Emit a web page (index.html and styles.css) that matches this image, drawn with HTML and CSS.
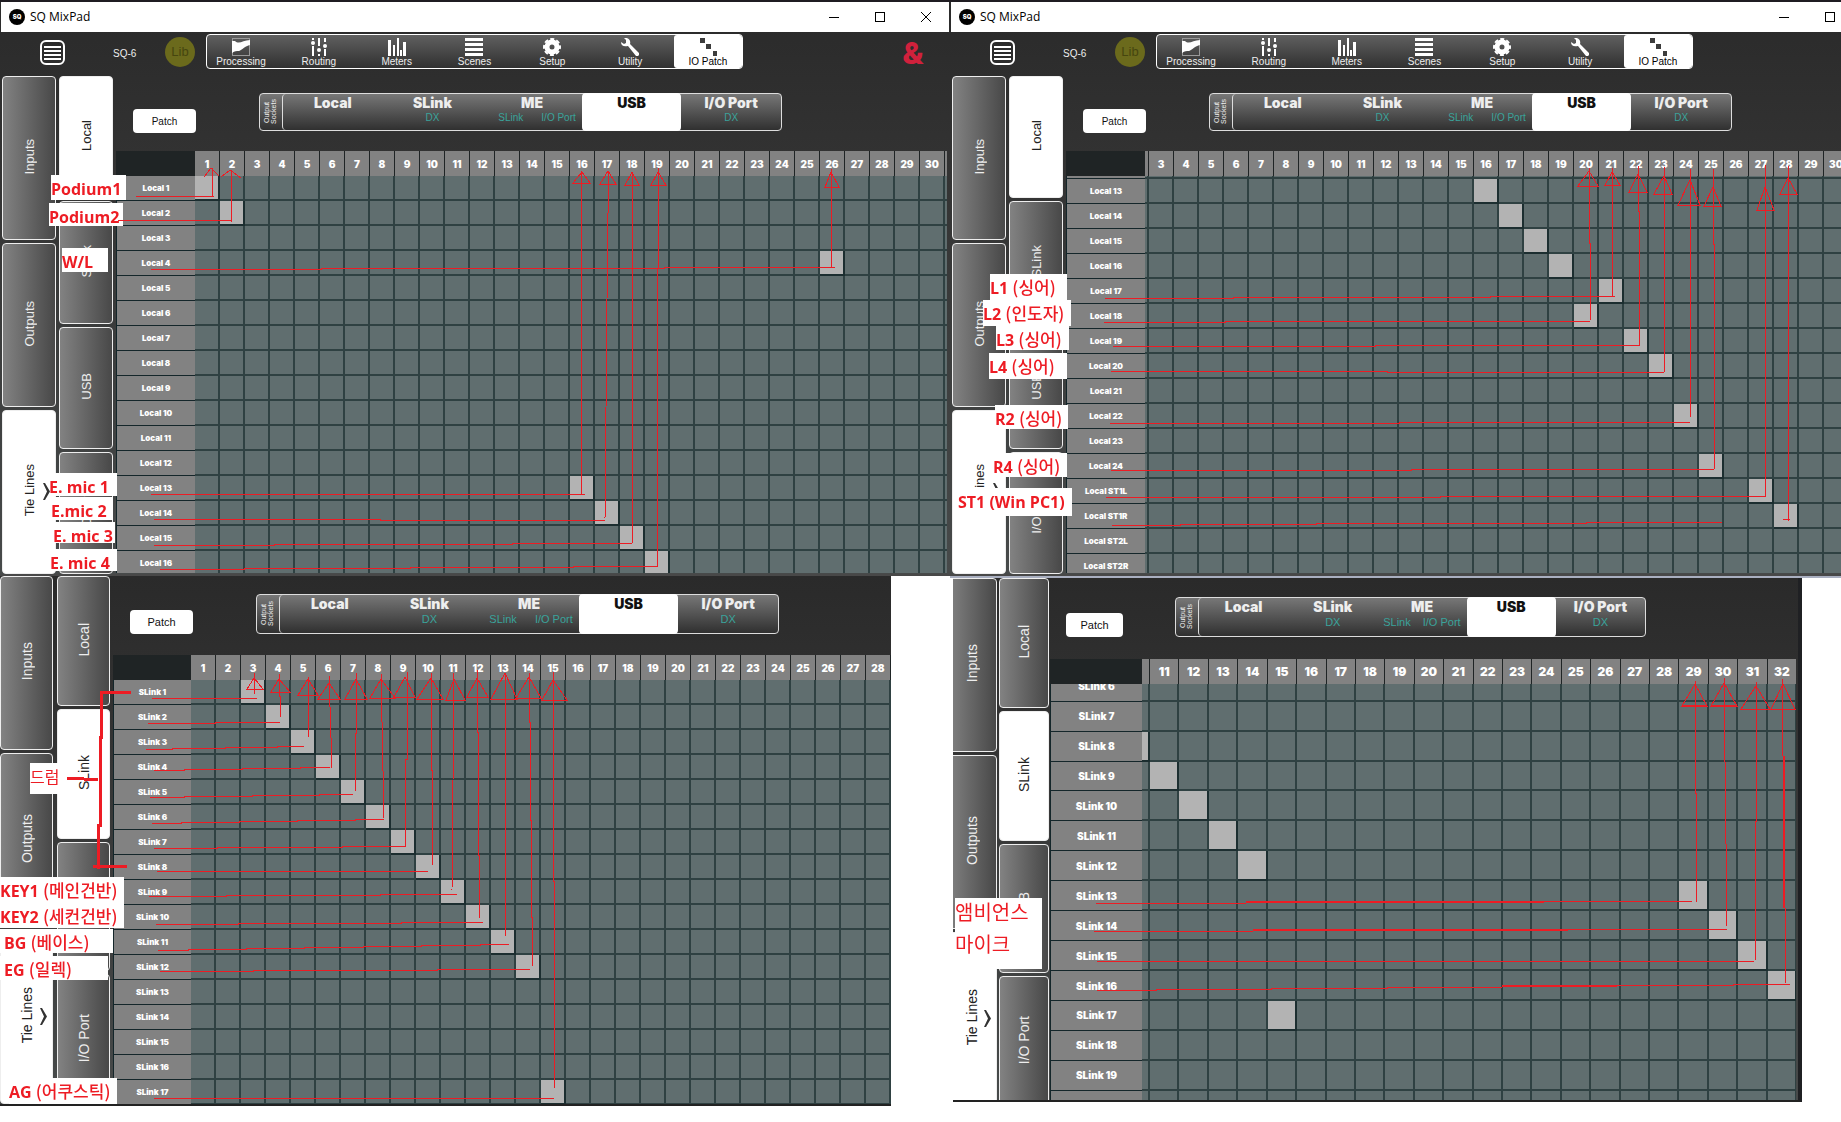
FILE: index.html
```html
<!DOCTYPE html>
<html lang="en">
<head>
<meta charset="utf-8">
<title>SQ MixPad – USB tie lines</title>
<link rel="stylesheet" href="styles.css">
<script src="patch.js" defer></script>
</head>
<body>
<svg class="defs" aria-hidden="true">
  <symbol id="i-menu" viewBox="0 0 25 25"><rect x="1" y="1" width="23" height="23" rx="5" fill="none" stroke="#fff" stroke-width="2"/><path d="M4 7h17M4 11h17M4 15h17M4 19h17" stroke="#fff" stroke-width="2"/></symbol>
  <symbol id="i-processing" viewBox="0 0 18 18"><rect x=".5" y=".5" width="17" height="17" fill="none" stroke="#999"/><path d="M0 3h3c4 4 8-1 15-1v5c-5 1-8 5-11 6-3 0-4 0-7 2z" fill="#fff"/></symbol>
  <symbol id="i-routing" viewBox="0 0 18 18"><g fill="#fff"><path d="M2 0h2v2H2zM2 8h2v10H2zM8 0h2v8H8zM8 16h2v2H8zM14 0h2v4h-2zM14 11h2v7h-2z"/><circle cx="3" cy="5" r="2"/><circle cx="9" cy="12" r="2"/><circle cx="15" cy="8" r="2"/></g></symbol>
  <symbol id="i-meters" viewBox="0 0 18 18"><path d="M0 2h3v16H0zM5 7h2v11H5zM9 0h2v18H9zM12 12h2v6h-2zM15 4h3v14h-3z" fill="#fff"/></symbol>
  <symbol id="i-scenes" viewBox="0 0 18 18"><path d="M0 0h18v3H0zM0 5h18v3H0zM0 10h18v3H0zM0 15h18v3H0z" fill="#fff"/></symbol>
  <symbol id="i-setup" viewBox="0 0 18 18"><circle cx="9" cy="9" r="5" fill="none" stroke="#fff" stroke-width="5"/><circle cx="9" cy="9" r="8" fill="none" stroke="#fff" stroke-width="2" stroke-dasharray="4 2.28" stroke-dashoffset="2"/></symbol>
  <symbol id="i-utility" viewBox="0 0 18 18"><path d="M0 4l3 2 2-1V2L3 0c5-1 7 3 6 6l9 9v2l-1 1h-2L7 8C3 9 0 8 0 4z" fill="#fff"/></symbol>
  <symbol id="i-patch" viewBox="0 0 18 18"><path d="M1 0h5v5H1zM7 6h5v5H7zM14 13h5v5h-5z" fill="#3c3c3c"/></symbol>
</svg>

<main class="board">
  <section class="panel window">
    <header class="titlebar">
      <span class="logo">SQ</span><span class="title">SQ MixPad</span>
      <div class="controls">
        <button aria-label="Minimise"><svg width="10" height="10"><path d="M0 5.5h10" stroke="#000"/></svg></button>
        <button aria-label="Maximise"><svg width="10" height="10"><rect x=".5" y=".5" width="9" height="9" fill="none" stroke="#000"/></svg></button>
        <button aria-label="Close"><svg width="10" height="10"><path d="M0 0l10 10M10 0L0 10" stroke="#000"/></svg></button>
      </div>
    </header>
    <div class="topbar">
      <button class="menu" aria-label="Menu"><svg><use href="#i-menu"/></svg></button>
      <span class="model">SQ-6</span><button class="lib">Lib</button>
      <nav class="tools">
        <button><svg><use href="#i-processing"/></svg>Processing</button>
        <button><svg><use href="#i-routing"/></svg>Routing</button>
        <button><svg><use href="#i-meters"/></svg>Meters</button>
        <button><svg><use href="#i-scenes"/></svg>Scenes</button>
        <button><svg><use href="#i-setup"/></svg>Setup</button>
        <button><svg><use href="#i-utility"/></svg>Utility</button>
        <button class="on"><svg><use href="#i-patch"/></svg>IO Patch</button>
      </nav>
      <span class="amp">&amp;</span>
    </div>
    <div class="work">
      <nav class="side"><button><span>Inputs</span></button><button><span>Outputs</span></button><button class="on more"><span>Tie Lines</span></button></nav>
      <nav class="side"><button class="on"><span>Local</span></button><button><span>SLink</span></button><button><span>USB</span></button><button><span>I/O Port</span></button></nav>
      <div class="content">
        <div class="sockets"><button class="patch">Patch</button>
          <div class="outputs"><span class="caption">Output<br>Sockets</span>
            <button>Local</button><button>SLink<small>DX</small></button><button>ME<small><i>SLink</i><i>I/O Port</i></small></button><button class="on">USB</button><button>I/O Port<small>DX</small></button></div>
        </div>
        <div class="matrix" data-source="local" data-left="0" data-top="0" data-on="1:1 2:2 4:26 13:16 14:17 15:18 16:19"></div>
      </div>
    </div>
  </section>

  <section class="panel window cropped">
    <header class="titlebar">
      <span class="logo">SQ</span><span class="title">SQ MixPad</span>
      <div class="controls">
        <button aria-label="Minimise"><svg width="10" height="10"><path d="M0 5.5h10" stroke="#000"/></svg></button>
        <button aria-label="Maximise"><svg width="10" height="10"><rect x=".5" y=".5" width="9" height="9" fill="none" stroke="#000"/></svg></button>
        <button aria-label="Close"><svg width="10" height="10"><path d="M0 0l10 10M10 0L0 10" stroke="#000"/></svg></button>
      </div>
    </header>
    <div class="topbar">
      <button class="menu" aria-label="Menu"><svg><use href="#i-menu"/></svg></button>
      <span class="model">SQ-6</span><button class="lib">Lib</button>
      <nav class="tools">
        <button><svg><use href="#i-processing"/></svg>Processing</button>
        <button><svg><use href="#i-routing"/></svg>Routing</button>
        <button><svg><use href="#i-meters"/></svg>Meters</button>
        <button><svg><use href="#i-scenes"/></svg>Scenes</button>
        <button><svg><use href="#i-setup"/></svg>Setup</button>
        <button><svg><use href="#i-utility"/></svg>Utility</button>
        <button class="on"><svg><use href="#i-patch"/></svg>IO Patch</button>
      </nav>
    </div>
    <div class="work">
      <nav class="side"><button><span>Inputs</span></button><button><span>Outputs</span></button><button class="on more"><span>Tie Lines</span></button></nav>
      <nav class="side"><button class="on"><span>Local</span></button><button><span>SLink</span></button><button><span>USB</span></button><button><span>I/O Port</span></button></nav>
      <div class="content">
        <div class="sockets"><button class="patch">Patch</button>
          <div class="outputs"><span class="caption">Output<br>Sockets</span>
            <button>Local</button><button>SLink<small>DX</small></button><button>ME<small><i>SLink</i><i>I/O Port</i></small></button><button class="on">USB</button><button>I/O Port<small>DX</small></button></div>
        </div>
        <div class="matrix" data-source="local" data-left="46" data-top="297" data-on="13:16 14:17 15:18 16:19 17:21 18:20 19:22 20:23 22:24 24:25 25:27 26:28"></div>
      </div>
    </div>
  </section>

  <section class="panel lower">
    <div class="work">
      <nav class="side"><button><span>Inputs</span></button><button><span>Outputs</span></button><button class="on more"><span>Tie Lines</span></button></nav>
      <nav class="side"><button><span>Local</span></button><button class="on"><span>SLink</span></button><button><span>USB</span></button><button><span>I/O Port</span></button></nav>
      <div class="content">
        <div class="sockets"><button class="patch">Patch</button>
          <div class="outputs"><span class="caption">Output<br>Sockets</span>
            <button>Local</button><button>SLink<small>DX</small></button><button>ME<small><i>SLink</i><i>I/O Port</i></small></button><button class="on">USB</button><button>I/O Port<small>DX</small></button></div>
        </div>
        <div class="matrix" data-source="slink" data-left="0" data-top="0" data-on="1:3 2:4 3:5 4:6 5:7 6:8 7:9 8:10 9:11 10:12 11:13 12:14 17:15"></div>
      </div>
    </div>
  </section>

  <div class="edge">
  <section class="panel lower zoomed">
    <div class="work">
      <nav class="side"><button><span>Inputs</span></button><button><span>Outputs</span></button><button class="on more"><span>Tie Lines</span></button></nav>
      <nav class="side"><button><span>Local</span></button><button class="on"><span>SLink</span></button><button><span>USB</span></button><button><span>I/O Port</span></button></nav>
      <div class="content">
        <div class="sockets"><button class="patch">Patch</button>
          <div class="outputs"><span class="caption">Output<br>Sockets</span>
            <button>Local</button><button>SLink<small>DX</small></button><button>ME<small><i>SLink</i><i>I/O Port</i></small></button><button class="on">USB</button><button>I/O Port<small>DX</small></button></div>
        </div>
        <div class="matrix" data-source="slink" data-left="286" data-top="162" data-on="8:10 9:11 10:12 11:13 12:14 13:29 14:30 15:31 16:32 17:15"></div>
      </div>
    </div>
  </section>
  </div>

  <svg class="notes" width="1841" height="1122" role="group" aria-label="Handwritten patch notes">
    <g class="paper">
      <rect x="51" y="175" width="75" height="25"/><rect x="49" y="203" width="74" height="23"/><rect x="62" y="248" width="46" height="24"/>
      <rect x="50" y="473" width="67" height="23"/><rect x="52" y="497" width="61" height="23"/><rect x="53" y="522" width="62" height="21"/><rect x="50" y="549" width="67" height="22"/>
      <rect x="990" y="274" width="77" height="26"/><rect x="983" y="300" width="88" height="26"/><rect x="996" y="326" width="73" height="24"/><rect x="989" y="353" width="78" height="26"/>
      <rect x="995" y="405" width="73" height="24"/><rect x="993" y="453" width="74" height="24"/><rect x="957" y="488" width="115" height="28"/>
      <rect x="30" y="763" width="36" height="31"/><rect x="0" y="877" width="124" height="51"/><rect x="0" y="929" width="113" height="24"/><rect x="0" y="956" width="108" height="24"/><rect x="9" y="1078" width="108" height="26"/>
      <rect x="955" y="898" width="87" height="71"/>
    </g>
    <g class="ink">
      <path d="M136 196H214M212 196V168M204 177L211 168L219 176M118 220H231M231 222V170M221 177L230 170L241 178"/>
      <path d="M151 269H321V268H664V267H835M831 268V169M831 172L825 187H839Z"/>
      <path d="M151 494H585M581 494V171M582 172L573 183H590ZM154 519H380V520H605M608 171V213L607 300L605 518M608 171L600 184H616Z"/>
      <path d="M154 545H274V544H512V543H632M632 543V172M632 172L625 185H639ZM160 569H244V568H410V567H573V566H658M658 168V268H657V566M658 172L651 185H666Z"/>
      <path d="M1104 322H1225V321H1590M1589 168V243H1590V320M1589 171L1578 186H1598ZM1105 298H1233V297H1490V296H1615M1612 168V297M1612 172L1605 185H1620Z"/>
      <path d="M1113 346H1375V345H1640M1638 166V211H1639V345M1638 174L1629 192H1647ZM1111 371H1387V372H1664M1664 167V372M1664 176L1654 194H1672Z"/>
      <path d="M1110 423H1399V422H1690M1690 169V417M1690 180L1678 205H1700ZM1111 470H1411V469H1714M1713 169V244H1714V469M1713 187L1704 206H1721Z"/>
      <path d="M1106 497H1440V496H1765M1765 165V497M1765 187L1757 210H1774ZM1112 525H1180V524H1316V523H1586V522H1722M1788 166V521M1788 178L1780 194H1797ZM1783 519H1790"/>
      <path d="M152 698H257M254 673V694M254 678L247 689H263ZM148 723H215V722H280M279 674V696H280V717M279 679L271 692H290Z"/>
      <path d="M146 749H172V748H225V747H277V746H304M308 677V737M308 679L298 695H318ZM154 770H184V769H242V768H300V767H330M329 676L332 768M329 683L318 699H340Z"/>
      <path d="M150 797H184V796H252V795H319V794H353M356 673V733H355V791M356 679L345 699H367ZM152 823H181V822H239V821H297V820H355V819H384M381 673L384 818M381 679L370 698H395Z"/>
      <path d="M154 848H217V847H342V846H406M407 672V759H405V846M405 677L394 697H415ZM157 871H428M431 673V770H432V865M431 678L417 699H443Z"/>
      <path d="M149 896H226V895H380V894H457M454 673L452 890M454 679L446 700H465ZM156 924H238V923H401V922H483M477 670V732H478V855H479V918M477 678L467 697H488Z"/>
      <path d="M158 950H188V949H246V948H304V947H363V946H421V945H480V944H509M505 673V936M505 673L491 699H517ZM160 971H253V970H437V969H530M529 673V722H530V820H531V917H532V966M529 677L516 698H541Z"/>
      <path d="M154 1098H554M553 672V881H554V1088M553 680L542 700H567Z"/>
      <path d="M1096 903H1246M1544 901H1692M1695 681V793H1696V902M1695 684L1682 706H1707ZM1094 931H1253M1568 929H1727M1724 678L1727 926M1724 683L1711 706H1737Z"/>
      <path d="M1097 961H1754M1756 682V821H1755V960M1756 686L1741 709H1770ZM1097 990H1156V989H1271V988H1387V987H1502M1617 985H1733V984H1790M1782 679V756M1785 908V983M1783 684L1771 709H1795Z"/>
      <path class="wide" d="M1246 902H1544M1253 930H1568M1502 986H1617M1784 756V908M1682 706H1707M1711 706H1737"/>
      <path class="marker" d="M131 692H101V737H100V825H98V869M93 866H110L127 867M67 778L84 779L98 780"/>
    </g>
    <g class="words">
      <text x="51" y="195">Podium1</text><text x="49" y="223">Podium2</text><text x="62" y="268">W/L</text>
      <text x="49" y="493">E. mic 1</text><text x="51" y="517">E.mic 2</text><text x="53" y="542">E. mic 3</text><text x="50" y="569">E. mic 4</text>
      <text x="990" y="294">L1 <tspan>(싱어)</tspan></text><text x="983" y="320">L2 <tspan>(인도자)</tspan></text><text x="996" y="346">L3 <tspan>(싱어)</tspan></text><text x="989" y="373">L4 <tspan>(싱어)</tspan></text>
      <text x="995" y="425">R2 <tspan>(싱어)</tspan></text><text x="993" y="473">R4 <tspan>(싱어)</tspan></text><text x="958" y="508">ST1 (Win PC1)</text>
      <text x="0" y="897">KEY1 <tspan>(메인건반)</tspan></text><text x="0" y="923">KEY2 <tspan>(세컨건반)</tspan></text><text x="4" y="949">BG <tspan>(베이스)</tspan></text><text x="4" y="976">EG <tspan>(일렉)</tspan></text><text x="9" y="1098">AG <tspan>(어쿠스틱)</tspan></text>
      <text class="thin" x="30" y="783">드럼</text>
      <text class="large" x="955" y="920">앰비언스</text><text class="large" x="955" y="952">마이크</text>
    </g>
  </svg>
</main>
</body>
</html>
```

FILE: styles.css
```css
* { box-sizing: border-box; }

body {
  margin: 0;
  background: #fff;
  font-family: "Liberation Sans", Arial, sans-serif;
  font-size: 10px;
}

button {
  margin: 0;
  padding: 0;
  border: 0;
  background: none;
  color: inherit;
  font: inherit;
}

.defs { position: absolute; width: 0; height: 0; }

.board {
  position: relative;
  display: grid;
  grid-template-columns: minmax(0, 950fr) minmax(0, 891fr);
  align-items: start;
  min-height: 100vh;
  align-content: start;
  overflow: hidden;
}

.panel {
  --side: 54px;
  --label: 79px;
  --table: 879px;
  overflow: hidden;
  background: linear-gradient(#2a2a2a, #333 30%, #474a4a);
  color: #eee;
}

/* Window frame */
.window { border-top: 2px solid #1f1c22; border-bottom: 2px solid #484848; }
.window > * { min-width: 950px; }

.titlebar {
  display: flex;
  align-items: center;
  gap: 5px;
  height: 30px;
  padding-left: 9px;
  border-left: 1px solid #2c2c2c;
  border-right: 1px solid #2c2c2c;
  background: #fff;
  color: #000;
  font-family: "Open Sans", "Noto Sans", sans-serif;
  font-size: 12px;
}
.titlebar .logo {
  width: 16px;
  height: 16px;
  margin-left: -1px;
  border-radius: 50%;
  background: #000;
  color: #fff;
  font: 900 6px/16px Inter, sans-serif;
  text-align: center;
}
.titlebar .title { padding-bottom: 1px; }
.controls { display: flex; margin-left: auto; }
.controls button { width: 46px; height: 28px; }

.topbar { display: flex; align-items: center; height: 44px; padding: 0 26px 0 40px; }
.menu svg { display: block; width: 25px; height: 25px; }
.menu { margin-bottom: 3px; }
.model { width: 52px; margin: 0 0 2px 48px; }
.model + .lib {
  width: 30px;
  height: 30px;
  margin: 0 11px 5px 0;
  border-radius: 50%;
  background: #6b6a1c;
  color: #46460f;
  font-size: 13px;
}
.tools {
  display: flex;
  justify-content: space-between;
  width: 537px;
  height: 35px;
  margin-bottom: 5px;
  border: 1px solid #fff;
  border-radius: 4px;
  background: linear-gradient(#606060, #303030);
}
.tools button {
  display: flex;
  flex-direction: column;
  align-items: center;
  width: 68px;
  padding-top: 3px;
  line-height: 12px;
}
.tools svg { width: 18px; height: 18px; flex: none; overflow: visible; }
.tools .on { border-radius: 3px; background: #fff; color: #000; }
.amp { margin: 0 0 3px auto; color: #d0213c; font: 900 32px/32px Roboto, sans-serif; }

/* Work area */
.work { display: flex; height: 498px; gap: 3px; padding: 0 3px 0 2px; }
.side { flex: none; display: grid; grid-auto-rows: 1fr; gap: 3px; width: var(--side); height: 498px; }
.side button {
  position: relative;
  border: 1px solid #eee;
  border-radius: 4px;
  background: linear-gradient(90deg, #828282, #484848);
  font-size: 13px;
}
.side span { writing-mode: vertical-rl; transform: rotate(180deg); display: inline-block; }
.side .on { background: #fff; color: #222; }
.more::after {
  content: "";
  position: absolute;
  right: 5px;
  top: 50%;
  width: 7px;
  height: 17px;
  margin-top: -9px;
  background: #333;
  clip-path: polygon(0 0, 2px 0, 7px 50%, 2px 100%, 0 100%, 4px 50%);
}

.content { flex: 1; min-width: 0; }
.sockets { display: flex; align-items: flex-start; height: 75px; padding: 17px 0 0 17px; }
.patch {
  flex: none;
  width: 63px;
  height: 24px;
  margin: 16px 63px 0 0;
  border-radius: 4px;
  background: #fff;
  color: #111;
}
.outputs {
  flex: none;
  display: flex;
  width: 523px;
  height: 38px;
  border: 1px solid #ddd;
  border-radius: 4px;
  background: linear-gradient(#777, #303030);
}
.caption {
  width: 22px;
  padding-right: 3px;
  writing-mode: vertical-rl;
  transform: rotate(180deg);
  font-size: 7px;
  line-height: 7px;
  text-align: center;
}
.outputs button {
  flex: 1 1 0;
  min-width: 0;
  display: flex;
  flex-direction: column;
  align-items: center;
  padding-top: 1px;
  font: 900 14px/15px Inter, "DejaVu Sans", sans-serif;
}
.outputs .caption + button { border-left: 1px solid #ddd; border-radius: 4px 0 0 4px; }
.outputs .on { margin: -1px 0; padding-top: 2px; border-radius: 4px; background: #fff; color: #111; }
.outputs small {
  display: flex;
  gap: 18px;
  color: #3aa39b;
  font: 10px/16px "Liberation Sans", Arial, sans-serif;
}
.outputs i { font-style: normal; white-space: nowrap; }
.outputs small:has(i) { align-self: flex-end; padding-right: 6px; }

/* Patch matrix */
.matrix { height: 422px; overflow: hidden; background: #1f2425; }
.matrix table {
  width: var(--table);
  table-layout: fixed;
  border-collapse: separate;
  border-spacing: 0;
}
.matrix th, .matrix td { height: 25px; padding: 0; line-height: 12px; }
.matrix td { border: solid #2f4142; border-width: 0 2px 2px 0; background: #606e6f; }
.matrix td.on { background: #b3b3b3; border-color: #1c2e30; }
.matrix th {
  position: sticky;
  background: #828282;
  color: #fff;
  font-family: Inter, "DejaVu Sans", sans-serif;
  font-weight: 900;
}
.matrix thead th { top: 0; z-index: 1; border-right: 1px solid #1f2425; font-size: 10px; }
.matrix tbody th { left: 0; border-bottom: 1px solid #14262a; border-left: 1px solid #14262a; font-size: 8px; }
.matrix thead .corner { left: 0; z-index: 2; width: var(--label); background: #1f2425; }

/* Lower captures, without the window frame */
.lower { --side: 53px; --label: 78px; --table: 878px; margin-right: 59px; border-bottom: 2px solid #222; }
.lower .work { height: 528px; gap: 4px; padding: 0; }
.lower .side { height: 528px; }
.lower .content { margin-left: -1px; }
.lower .side button { font-size: 14px; }
.lower .patch, .lower .outputs small { font-size: 11px; }
.lower .sockets { height: 79px; padding-top: 18px; }
.lower .outputs { height: 40px; }
.lower .matrix { height: 449px; }

.edge { border-top: 2px solid #a9afc0; }
.zoomed {
  --side: 50px;
  --label: 92px;
  --table: 1033px;
  margin: 0 39px 0 3px;
  border-right: 4px solid #1f2023;
}
.zoomed .work { height: 522px; margin-left: -6px; padding-right: 2px; gap: 2px; }
.zoomed .sockets { height: 81px; padding: 19px 0 0 16px; }
.zoomed .patch { width: 57px; margin-right: 52px; }
.zoomed .outputs { width: 471px; }
.zoomed .outputs small { gap: 12px; }
.zoomed .matrix { height: 441px; }
.zoomed .matrix table { height: 624px; }
.zoomed .matrix thead th { font-size: 12px; }
.zoomed .matrix tbody th { font-size: 10px; }

/* Notes drawn over the captures */
.notes { position: absolute; left: 0; top: 0; z-index: 5; pointer-events: none; }
.paper { fill: #fff; }
.ink { fill: none; stroke: #ed1c24; stroke-width: 1px; shape-rendering: crispEdges; }
.ink .wide { stroke-width: 2px; }
.ink .marker { stroke-width: 3px; }
.words { fill: #ed1c24; font: 700 16px "Open Sans", "Noto Sans CJK KR", sans-serif; }
.words tspan { font-family: "Noto Sans CJK KR", sans-serif; font-weight: 500; font-size: 17px; }
.words .thin { font-weight: 400; }
.words .large { font-weight: 400; font-size: 20px; }
```

FILE: patch.js
```js
const numbered = (name, count) => Array.from({ length: count }, (_, i) => `${name} ${i + 1}`);

const sources = {
  local: [...numbered("Local", 24), "Local ST1L", "Local ST1R", "Local ST2L", "Local ST2R"],
  slink: numbered("SLink", 20),
};
const USB_CHANNELS = 32;

function cell(tag, text, className) {
  const el = document.createElement(tag);
  if (text) el.textContent = text;
  if (className) el.className = className;
  return el;
}

document.querySelectorAll(".matrix").forEach((box) => {
  const patched = new Set(box.dataset.on.split(" "));
  const table = document.createElement("table");
  const head = table.createTHead().insertRow();
  head.append(cell("th", "", "corner"));
  for (let c = 1; c <= USB_CHANNELS; c++) head.append(cell("th", String(c)));

  const body = table.createTBody();
  sources[box.dataset.source].forEach((name, r) => {
    const row = body.insertRow();
    row.append(cell("th", name));
    for (let c = 1; c <= USB_CHANNELS; c++) {
      row.append(cell("td", "", patched.has(`${r + 1}:${c}`) ? "on" : ""));
    }
  });

  box.append(table);
  box.scrollLeft = Number(box.dataset.left);
  box.scrollTop = Number(box.dataset.top);
});
```
